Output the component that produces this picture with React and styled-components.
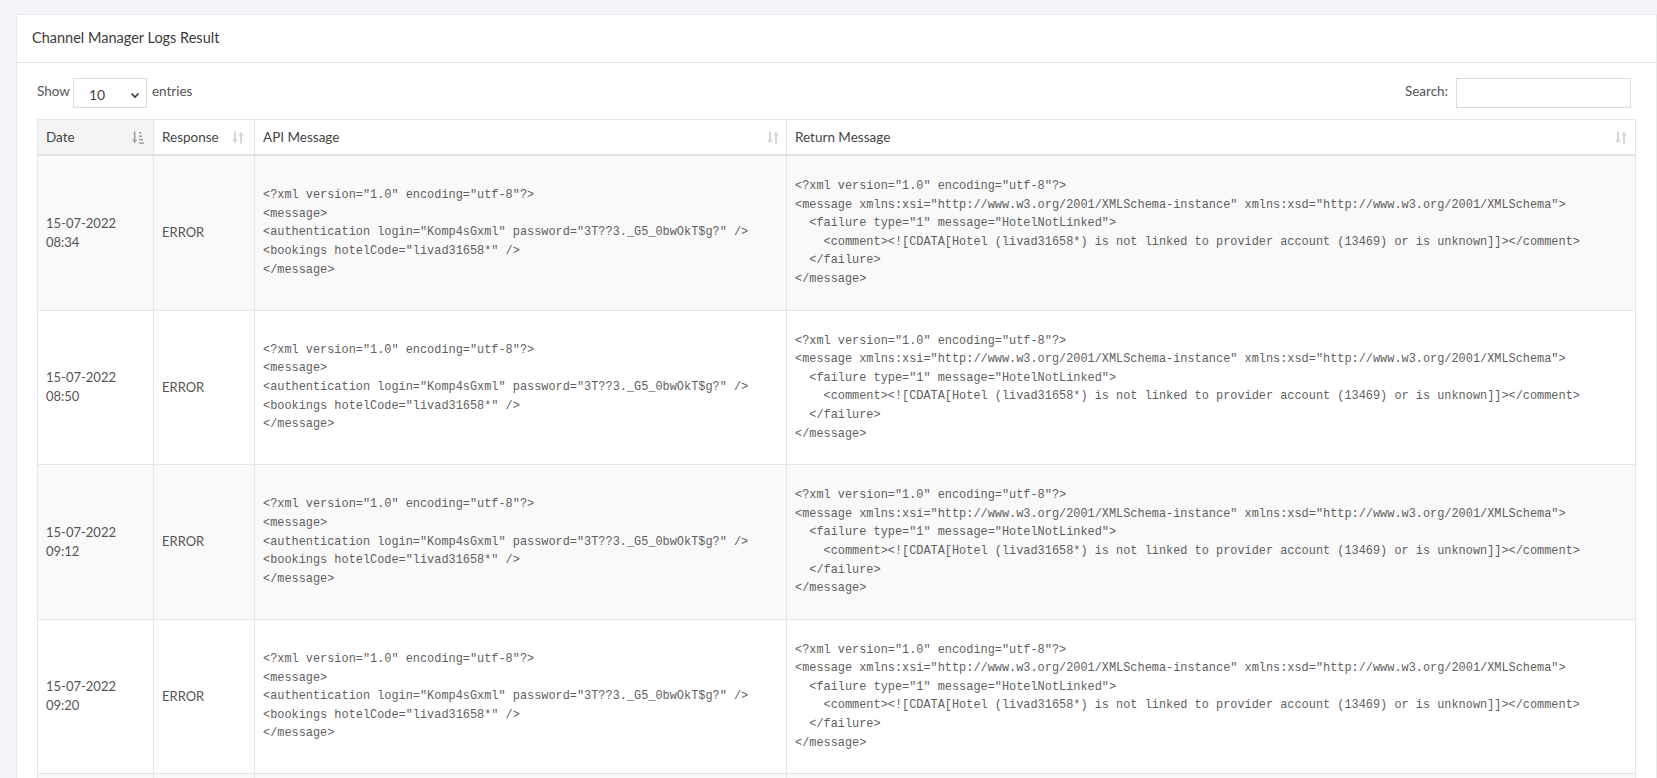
import React from "react";
import styled, { createGlobalStyle } from "styled-components";

const GlobalStyle = createGlobalStyle`
  html, body { margin: 0; padding: 0; overflow: hidden; }
  body {
    background: #f3f4f8;
    font-family: Lato, "Open Sans", Arial, sans-serif;
    color: #555;
  }
`;

const Page = styled.div`
  padding: 14px 0 0 16px;
  min-height: 778px;
  box-sizing: border-box;
`;

const Card = styled.section`
  background: #fff;
  border: 1px solid #e8e9ec;
`;

const CardHeader = styled.header`
  height: 44px;
  display: flex;
  align-items: center;
  padding: 0 15px 3px 15px;
  border-bottom: 1px solid #e6e7ea;
  font-size: 14.5px;
  color: #3c3c3c;
`;

const CardBody = styled.div`
  padding: 15px 20px 0 20px;
`;

const Toolbar = styled.div`
  display: flex;
  align-items: flex-start;
  justify-content: space-between;
  height: 30px;
  margin-bottom: 11px;
  font-size: 13.5px;
  line-height: 26px;
  color: #555;
`;

const LengthControl = styled.label`
  display: flex;
  align-items: flex-start;
`;

const SelectBox = styled.div`
  width: 74px;
  height: 30px;
  margin: 0 5px 0 3px;
  box-sizing: border-box;
  border: 1px solid #dcdcdc;
  display: flex;
  align-items: center;
  justify-content: space-between;
  padding: 3px 6px 0 15px;
  font-size: 14px;
  line-height: 1;
  color: #444;
`;

const SearchControl = styled.label`
  display: flex;
  align-items: flex-start;
  gap: 8px;
  margin-right: 5px;
`;

const SearchInput = styled.div`
  width: 175px;
  height: 30px;
  box-sizing: border-box;
  border: 1px solid #dcdcdc;
`;

const Table = styled.table`
  width: 1598px;
  table-layout: fixed;
  border-collapse: collapse;
  border: 1px solid #e6e6e6;
`;

const Th = styled.th`
  height: 34px;
  padding: 0 3px 0 8px;
  text-align: left;
  font-weight: 400;
  font-size: 13.5px;
  color: #444;
  background: ${(p) => (p.$sorted ? "#f4f4f4" : "#fff")};
  border: 1px solid #e6e6e6;
  border-bottom: 2px solid #e3e3e3;
`;

const ThInner = styled.div`
  display: flex;
  align-items: center;
  justify-content: space-between;
  padding-right: ${(p) => p.$pr}px;
`;

const Tr = styled.tr`
  background: ${(p) => (p.$odd ? "#f9f9f9" : "#fff")};
`;

const Td = styled.td`
  padding: 21px 8px;
  border: 1px solid #e6e6e6;
  vertical-align: middle;
  font-size: 13px;
  line-height: 19px;
  color: #555;
`;

const Code = styled.pre`
  margin: 0;
  font-family: "Liberation Mono", "DejaVu Sans Mono", monospace;
  font-size: 11.9px;
  line-height: 18.6px;
  color: #5f5f5f;
  white-space: pre;
  overflow: hidden;
`;

const Chevron = () => (
  <svg width="10" height="8" viewBox="0 0 10 8">
    <path d="M1.5 2.5 L5 6 L8.5 2.5" fill="none" stroke="#333" strokeWidth="1.6" />
  </svg>
);

const SortIcon = ({ active }) =>
  active ? (
    <svg width="12" height="13" viewBox="0 0 12 13">
      <path d="M2.7 0.5 V10.5" stroke="#a9a9a9" strokeWidth="1.8" />
      <path d="M0 8.5 L2.7 12.5 L5.4 8.5 Z" fill="#a9a9a9" />
      <rect x="7" y="1" width="2.2" height="1.8" fill="#a9a9a9" />
      <rect x="7" y="4.4" width="3" height="1.8" fill="#a9a9a9" />
      <rect x="7" y="7.8" width="4" height="1.8" fill="#a9a9a9" />
      <rect x="7" y="11.2" width="5" height="1.8" fill="#a9a9a9" />
    </svg>
  ) : (
    <svg width="12" height="13" viewBox="0 0 12 13">
      <path d="M3 0.5 V10" stroke="#d6d6d6" strokeWidth="2" />
      <path d="M0.3 8.3 L3 12.5 L5.7 8.3 Z" fill="#d6d6d6" />
      <path d="M9 3 V12.5" stroke="#d6d6d6" strokeWidth="2" />
      <path d="M6.3 4.7 L9 0.5 L11.7 4.7 Z" fill="#d6d6d6" />
    </svg>
  );

const apiMessage = `<?xml version="1.0" encoding="utf-8"?>
<message>
<authentication login="Komp4sGxml" password="3T??3._G5_0bwOkT$g?" />
<bookings hotelCode="livad31658*" />
</message>`;

const returnMessage = `<?xml version="1.0" encoding="utf-8"?>
<message xmlns:xsi="http://www.w3.org/2001/XMLSchema-instance" xmlns:xsd="http://www.w3.org/2001/XMLSchema">
  <failure type="1" message="HotelNotLinked">
    <comment><![CDATA[Hotel (livad31658*) is not linked to provider account (13469) or is unknown]]></comment>
  </failure>
</message>`;

const rows = [
  { date: "15-07-2022", time: "08:34" },
  { date: "15-07-2022", time: "08:50" },
  { date: "15-07-2022", time: "09:12" },
  { date: "15-07-2022", time: "09:20" },
  { date: "15-07-2022", time: "09:41" },
];

const columns = [
  { key: "date", label: "Date", width: 116, sorted: true, pr: 6 },
  { key: "response", label: "Response", width: 101, pr: 7 },
  { key: "api", label: "API Message", width: 532, pr: 4 },
  { key: "ret", label: "Return Message", width: 849, pr: 5 },
];

export default function App() {
  return (
    <>
      <GlobalStyle />
      <Page>
        <Card>
          <CardHeader>Channel Manager Logs Result</CardHeader>
          <CardBody>
            <Toolbar>
              <LengthControl>
                Show
                <SelectBox>
                  <span>10</span>
                  <Chevron />
                </SelectBox>
                entries
              </LengthControl>
              <SearchControl>
                Search:
                <SearchInput />
              </SearchControl>
            </Toolbar>
            <Table>
              <colgroup>
                {columns.map((c) => (
                  <col key={c.key} style={{ width: c.width }} />
                ))}
              </colgroup>
              <thead>
                <tr>
                  {columns.map((c) => (
                    <Th key={c.key} $sorted={c.sorted}>
                      <ThInner $pr={c.pr}>
                        <span>{c.label}</span>
                        <SortIcon active={c.sorted} />
                      </ThInner>
                    </Th>
                  ))}
                </tr>
              </thead>
              <tbody>
                {rows.map((r, i) => (
                  <Tr key={i} $odd={i % 2 === 0}>
                    <Td>
                      {r.date}
                      <br />
                      {r.time}
                    </Td>
                    <Td>ERROR</Td>
                    <Td>
                      <Code>{apiMessage}</Code>
                    </Td>
                    <Td>
                      <Code>{returnMessage}</Code>
                    </Td>
                  </Tr>
                ))}
              </tbody>
            </Table>
          </CardBody>
        </Card>
      </Page>
    </>
  );
}
